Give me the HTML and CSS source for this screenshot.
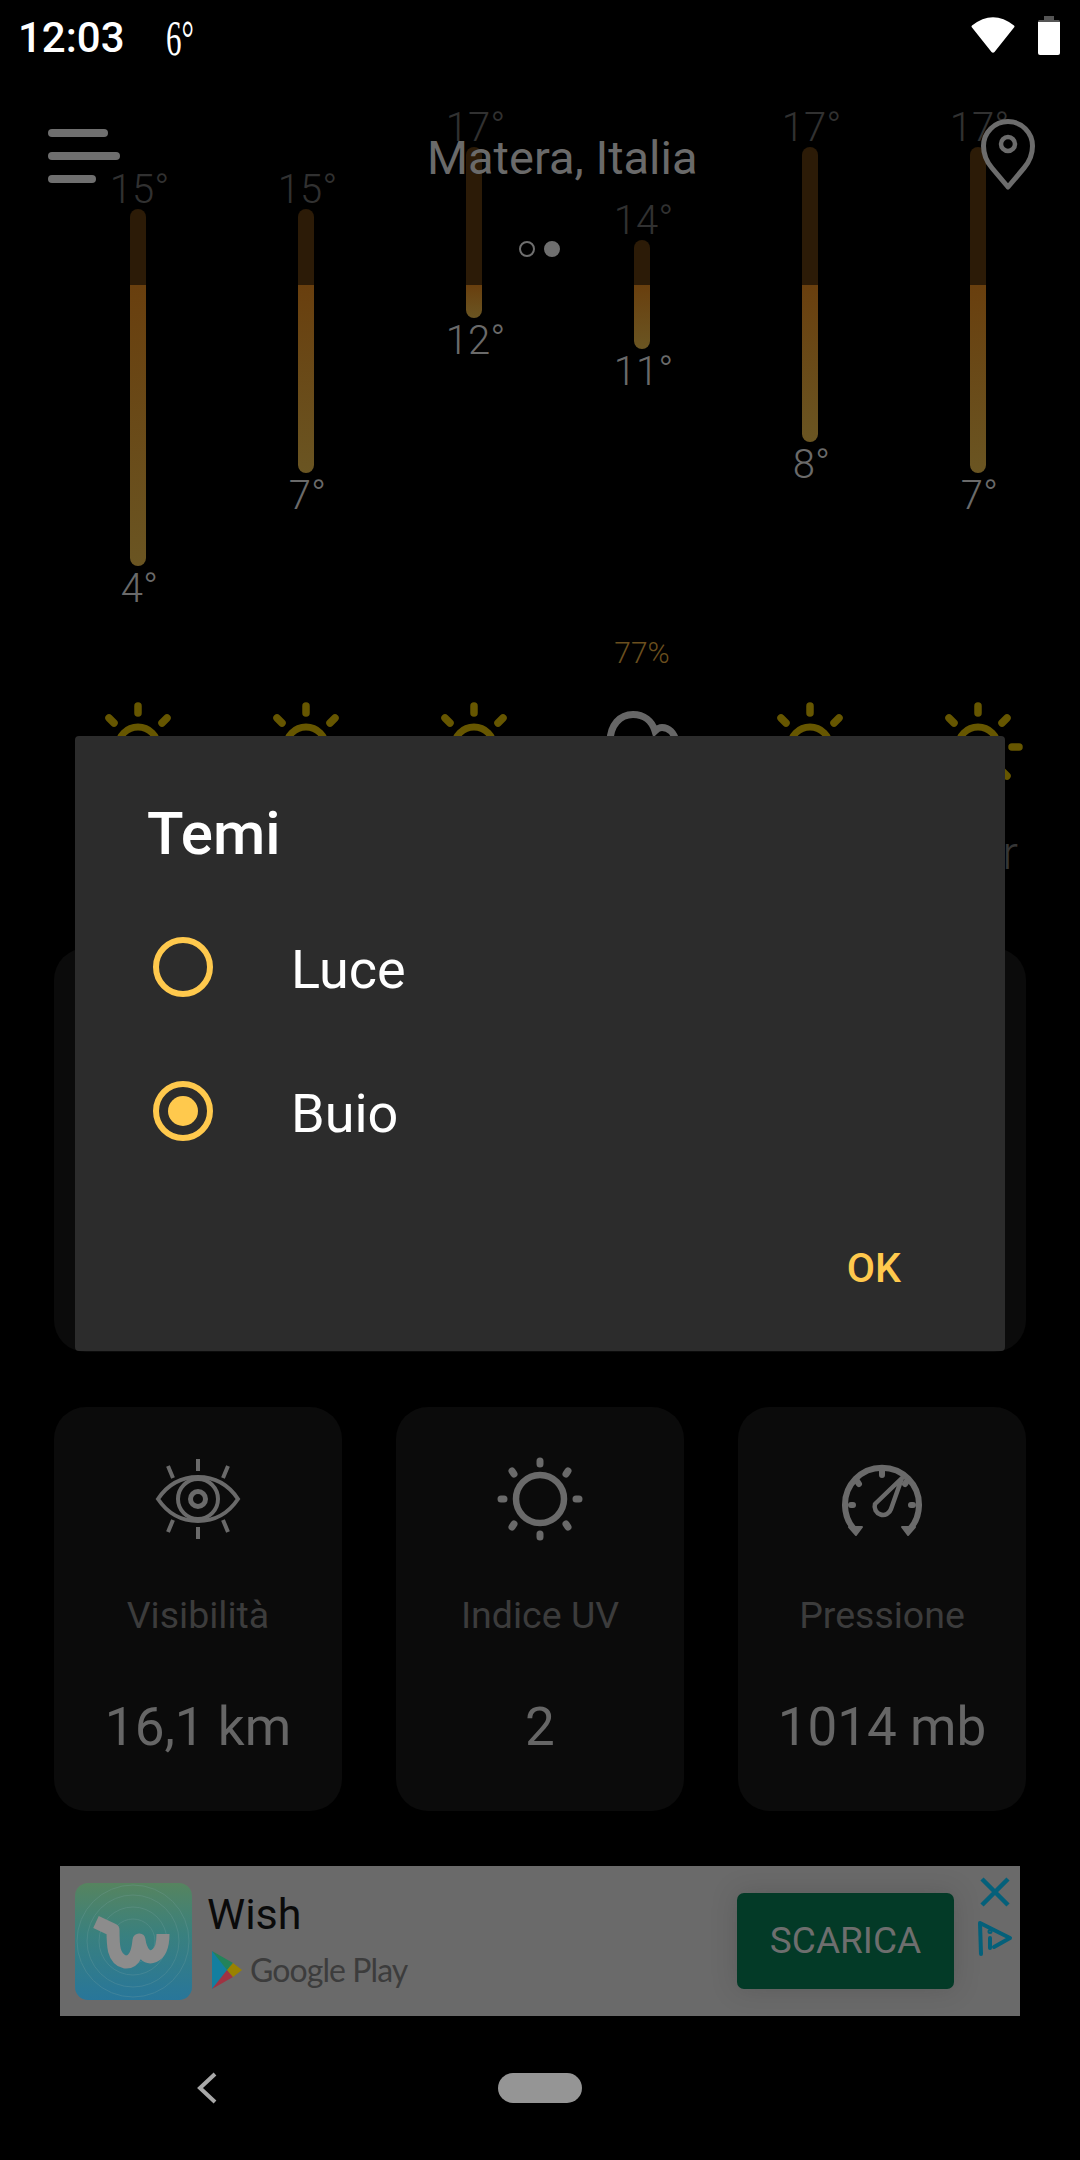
FILE: index.html
```html
<!DOCTYPE html>
<html lang="it">
<head>
    <meta charset="UTF-8">
    <meta name="viewport" content="width=device-width, initial-scale=1.0">
    <title>Meteo - Matera, Italia</title>
    <link rel="stylesheet" href="styles.css">
</head>
<body>
<div class="screen">
    <!-- Status bar -->
    <div class="status">
        <span class="time">12:03</span>
        <span class="status-temp">6°</span>
        <div class="status-icons">
            <svg width="46" height="38" viewBox="0 0 46 38"><path d="M2 9.5 Q23 -7 44 9.5 Q45 10.5 44 11.5 L24.5 36 Q23 37.5 21.5 36 L2 11.5 Q1 10.5 2 9.5 Z" fill="#fff"/></svg>
            <svg width="22" height="40" viewBox="0 0 22 40"><rect x="6" width="10" height="6" fill="#555"/><rect y="4" width="22" height="3" rx="1.5" fill="#555"/><path d="M0 6 H22 V37 Q22 39 20 39 H2 Q0 39 0 37 Z" fill="#fff"/></svg>
        </div>
    </div>

    <!-- App bar lies over the chart -->
    <div class="app-bar">
        <div class="menu">
            <span class="menu-line menu-line-a"></span>
            <span class="menu-line menu-line-b"></span>
            <span class="menu-line menu-line-c"></span>
        </div>
        <div class="city">Matera, Italia</div>
        <svg class="pin" width="56" height="74" viewBox="0 0 56 74" fill="none" stroke="#6c6c6c"><path d="M28 69 L12 50 C6 43 3.500 36 3.500 28 A24.500 24.500 0 0 1 52.500 28 C52.500 36 50 43 44 50 Z" stroke-width="5" stroke-linejoin="round"/><circle cx="28" cy="26" r="7" stroke-width="4.500"/></svg>
        <div class="pager"><span class="dot"></span><span class="dot dot-on"></span></div>
    </div>

    <!-- Temperature chart -->
    <div class="chart">
        <div class="day-col" style="padding-top:62px">
            <div class="hi">15°</div>
            <div class="bar-top" style="height:76px"></div>
            <div class="bar-low" style="height:281px"></div>
            <div class="lo">4°</div>
        </div>
        <div class="day-col" style="padding-top:62px">
            <div class="hi">15°</div>
            <div class="bar-top" style="height:76px"></div>
            <div class="bar-low" style="height:188px"></div>
            <div class="lo">7°</div>
        </div>
        <div class="day-col">
            <div class="hi">17°</div>
            <div class="bar-top" style="height:138px"></div>
            <div class="bar-low" style="height:33px"></div>
            <div class="lo">12°</div>
        </div>
        <div class="day-col" style="padding-top:93px">
            <div class="hi">14°</div>
            <div class="bar-top" style="height:45px"></div>
            <div class="bar-low" style="height:64px"></div>
            <div class="lo">11°</div>
        </div>
        <div class="day-col">
            <div class="hi">17°</div>
            <div class="bar-top" style="height:138px"></div>
            <div class="bar-low" style="height:157px"></div>
            <div class="lo">8°</div>
        </div>
        <div class="day-col">
            <div class="hi">17°</div>
            <div class="bar-top" style="height:138px"></div>
            <div class="bar-low" style="height:188px"></div>
            <div class="lo">7°</div>
        </div>
    </div>

    <!-- Forecast icons -->
    <svg width="0" height="0" class="defs">
        <symbol id="sun" viewBox="-50 -50 100 100">
            <g fill="none" stroke="#665600" stroke-linecap="round">
                <circle r="20" stroke-width="7"/>
                <path d="M0 -41 V-34 M0 41 V34 M41 0 H34 M-41 0 H-34 M-29 -29 L-24 -24 M29 -29 L24 -24 M-29 29 L-24 24 M29 29 L24 24" stroke-width="7.500"/>
            </g>
        </symbol>
    </svg>
    <div class="forecast">
        <div class="forecast-cell">
            <div class="rain"></div>
            <svg class="wx" viewBox="0 0 100 100"><use href="#sun"/></svg>
            <div class="weekday"></div>
        </div>
        <div class="forecast-cell">
            <div class="rain"></div>
            <svg class="wx" viewBox="0 0 100 100"><use href="#sun"/></svg>
            <div class="weekday"></div>
        </div>
        <div class="forecast-cell">
            <div class="rain"></div>
            <svg class="wx" viewBox="0 0 100 100"><use href="#sun"/></svg>
            <div class="weekday"></div>
        </div>
        <div class="forecast-cell">
            <div class="rain">77%</div>
            <svg class="wx" viewBox="0 0 100 100"><path d="M18 70 C10 64 14 50 18 45 C18 28 28 17.500 41 17.500 C52 17.500 60 24 63 34 C66 31 68 30.500 70 30.500 C77 30.500 82 36 84 44 C90 54 84 70 72 70 Z" fill="none" stroke="#666" stroke-width="7"/></svg>
            <div class="weekday"></div>
        </div>
        <div class="forecast-cell">
            <div class="rain"></div>
            <svg class="wx" viewBox="0 0 100 100"><use href="#sun"/></svg>
            <div class="weekday"></div>
        </div>
        <div class="forecast-cell">
            <div class="rain"></div>
            <svg class="wx" viewBox="0 0 100 100"><use href="#sun"/></svg>
            <div class="weekday">Mar</div>
        </div>
    </div>

    <!-- Card behind the dialog -->
    <div class="card-wide"></div>

    <!-- Stats -->
    <div class="stats">
        <div class="stat">
            <svg class="stat-icon" viewBox="-50 -50 100 100" fill="none" stroke="#6a6a6a" stroke-width="4">
                <path d="M-40 0 C-30 -15 -16 -22 0 -22 C16 -22 30 -15 40 0 C30 15 16 22 0 22 C-16 22 -30 15 -40 0 Z"/>
                <circle r="20"/>
                <circle r="7.500" stroke-width="5"/>
                <path d="M0 -40 V-28 M-30 -33 L-25 -21 M30 -33 L25 -21 M0 40 V28 M-30 33 L-25 21 M30 33 L25 21"/>
            </svg>
            <div class="stat-label">Visibilità</div>
            <div class="stat-value">16,1 km</div>
        </div>
        <div class="stat">
            <svg class="stat-icon" viewBox="-50 -50 100 100" fill="none" stroke="#6a6a6a" stroke-linecap="round">
                <circle r="24" stroke-width="6.500"/>
                <path d="M0 -38 V-35 M0 38 V35 M39 0 H36 M-39 0 H-36 M-28 -28 L-26 -25 M28 -28 L26 -25 M-28 28 L-26 25 M28 28 L26 25" stroke-width="7"/>
            </svg>
            <div class="stat-label">Indice UV</div>
            <div class="stat-value">2</div>
        </div>
        <div class="stat">
            <svg class="stat-icon" viewBox="-50 -50 100 100" fill="none" stroke="#6a6a6a">
                <path d="M-25 27 A37 37 0 1 1 25 27" stroke-width="6" transform="translate(0 6)"/>
                <path d="M-33 28 L-26 36 L-20 28 Z M33 28 L26 36 L20 28 Z" fill="#6a6a6a" stroke-width="2" stroke-linejoin="round"/>
                <path d="M0 -28 V-24 M-25 -18 L-23 -15 M25 -18 L23 -15 M-31 6 H-29 M31 6 H29" stroke-width="6" stroke-linecap="round"/>
                <path d="M20 -21 L9 10 A8 8 0 0 1 -7 5 Z" stroke-width="4.500" stroke-linejoin="round"/>
            </svg>
            <div class="stat-label">Pressione</div>
            <div class="stat-value">1014 mb</div>
        </div>
    </div>

    <!-- Ad banner -->
    <div class="ad">
        <svg class="ad-icon" width="117" height="117" viewBox="0 0 117 117">
            <defs>
                <linearGradient id="wishBg" x1="0" y1="0" x2="0" y2="1">
                    <stop offset="0" stop-color="#56845f"/>
                    <stop offset="0.45" stop-color="#39807f"/>
                    <stop offset="1" stop-color="#28769a"/>
                </linearGradient>
            </defs>
            <rect width="117" height="117" rx="13" fill="url(#wishBg)"/>
            <g fill="none" stroke="#7fa8a8" stroke-width="1" opacity="0.25">
                <circle cx="58" cy="58" r="22"/>
                <circle cx="58" cy="58" r="34"/>
                <circle cx="58" cy="58" r="46"/>
                <circle cx="58" cy="58" r="56"/>
            </g>
            <path d="M21 39 L38 47 C38 62 38 76 50 79 C60 80 63 68 64 57 C66 70 72 76 79 73 C86 70 88 60 88 51" fill="none" stroke="#8c8c8c" stroke-width="13" stroke-linejoin="round"/>
        </svg>
        <div class="ad-text">
            <div class="ad-name">Wish</div>
            <div class="ad-store">
                <svg width="30" height="38" viewBox="0 0 30 38">
                    <path d="M0 0 L19 19 L0 38 Z" fill="#137f9f"/>
                    <path d="M0 0 L21 12 L15 19 Z" fill="#23835a"/>
                    <path d="M0 38 L21 26 L15 19 Z" fill="#a03342"/>
                    <path d="M21 12 L30 19 L21 26 L15 19 Z" fill="#9a8200"/>
                </svg>
                <span class="store-name">Google Play</span>
            </div>
        </div>
        <div class="ad-button">SCARICA</div>
        <div class="ad-marks">
            <svg width="30" height="30" viewBox="0 0 30 30"><path d="M2 2 L28 28 M28 2 L2 28" stroke="#04607a" stroke-width="4.500"/></svg>
            <svg width="36" height="38" viewBox="0 0 36 38" fill="none" stroke="#04607a" stroke-width="4" stroke-linecap="round" stroke-linejoin="round"><path d="M4 35 L3 4 L33 19 L17 28"/><path d="M13 19 V29"/><circle cx="13" cy="12.500" r="1" stroke-width="3"/></svg>
        </div>
    </div>

    <!-- Navigation bar -->
    <div class="nav-bar">
        <svg width="22" height="32" viewBox="0 0 22 32"><path d="M19 2 L4 16 L19 30" fill="none" stroke="#a8a8a8" stroke-width="4"/></svg>
        <span class="home-pill"></span>
    </div>

    <!-- Theme dialog -->
    <div class="dialog">
        <div class="dialog-title">Temi</div>
        <div class="option">
            <span class="radio"></span>
            <span class="option-label">Luce</span>
        </div>
        <div class="option">
            <span class="radio radio-on"></span>
            <span class="option-label">Buio</span>
        </div>
        <div class="dialog-actions">
            <span class="dialog-ok">OK</span>
        </div>
    </div>
</div>
</body>
</html>
```

FILE: styles.css
```css
* {
    box-sizing: border-box;
}
body {
    margin: 0;
    background-color: #000;
    font-family: Roboto, "Liberation Sans", sans-serif;
}
.screen {
    position: relative;
    display: flex;
    flex-direction: column;
    width: 1080px;
    height: 2160px;
    overflow: hidden;
    background-color: #000;
}

/* Status bar */
.status {
    display: flex;
    align-items: center;
    height: 70px;
    padding: 5px 20px 0 18px;
    color: #fff;
}
.time {
    font-size: 42px;
    font-weight: 500;
}
.status-temp {
    display: inline-block;
    margin-left: 41px;
    font-family: "Liberation Serif", serif;
    font-size: 50px;
    line-height: 50px;
    transform: scaleX(0.62);
    transform-origin: left center;
}
.status-icons {
    display: flex;
    align-items: flex-start;
    gap: 22px;
    margin-left: auto;
    margin-top: -4px;
}

/* App bar */
.app-bar {
    position: absolute;
    top: 70px;
    left: 0;
    right: 0;
    display: flex;
    align-items: flex-start;
    padding: 59px 44px 0 48px;
}
.menu {
    display: flex;
    flex-direction: column;
    gap: 15px;
    width: 72px;
}
.menu-line {
    display: block;
    height: 8px;
    border-radius: 4px;
    background-color: #6f6f6f;
}
.menu-line-a {
    width: 60px;
}
.menu-line-b {
    width: 72px;
}
.menu-line-c {
    width: 48px;
}
.city {
    margin: 1px 0 0 307px;
    font-size: 47px;
    line-height: 56px;
    color: #6a6a6a;
}
.pin {
    margin: -11px 0 0 auto;
}
.pager {
    position: absolute;
    top: 171px;
    left: 519px;
    display: flex;
    gap: 9px;
}
.dot {
    width: 16px;
    height: 16px;
    border: 2px solid #6f6f6f;
    border-radius: 50%;
}
.dot-on {
    background-color: #6f6f6f;
}

/* Chart */
.chart {
    display: grid;
    grid-template-columns: repeat(6, 168px);
    margin: 35px 0 0 54px;
}
.day-col {
    display: flex;
    flex-direction: column;
    align-items: center;
}
.hi, .lo {
    padding-left: 3px;
    font-size: 40px;
    font-weight: 300;
}
.hi {
    margin-top: 3px;
    line-height: 39px;
    color: #313131;
}
.lo {
    line-height: 46px;
    color: #6a6a6a;
}
.bar-top {
    width: 16px;
    border-radius: 8px 8px 0 0;
    background-color: #2c1b07;
}
.bar-low {
    width: 16px;
    border-radius: 0 0 8px 8px;
    background: linear-gradient(#693f0e, #6a5522);
}

/* Forecast */
.defs {
    position: absolute;
}
.forecast {
    display: grid;
    grid-template-columns: repeat(6, 168px);
    margin: 23px 0 0 54px;
}
.forecast-cell {
    display: flex;
    flex-direction: column;
    align-items: center;
}
.rain {
    height: 36px;
    font-size: 30px;
    font-weight: 300;
    line-height: 36px;
    color: #6b4f1e;
}
.wx {
    width: 100px;
    height: 100px;
    margin-top: 26px;
}
.weekday {
    height: 52px;
    margin-top: 30px;
    font-size: 46px;
    font-weight: 300;
    line-height: 52px;
    color: #363636;
}

/* Cards */
.card-wide {
    height: 404px;
    margin: 69px 54px 0;
    border-radius: 32px;
    background-color: #0b0b0b;
}
.stats {
    display: grid;
    grid-template-columns: repeat(3, 288px);
    column-gap: 54px;
    margin: 55px 54px 0;
}
.stat {
    display: flex;
    flex-direction: column;
    align-items: center;
    height: 404px;
    padding-top: 42px;
    border-radius: 32px;
    background-color: #0b0b0b;
}
.stat-icon {
    width: 100px;
    height: 100px;
}
.stat-label {
    margin-top: 44px;
    font-size: 37.5px;
    line-height: 44px;
    color: #3c3c3c;
}
.stat-value {
    margin-top: 58px;
    font-size: 53px;
    line-height: 64px;
    color: #666;
}

/* Ad banner */
.ad {
    display: flex;
    align-items: center;
    width: 960px;
    height: 150px;
    margin: 55px 0 0 60px;
    padding-left: 15px;
    background-color: #6a6a6a;
}
.ad-icon {
    flex: none;
}
.ad-text {
    margin-left: 15px;
}
.ad-name {
    font-size: 43px;
    line-height: 47px;
    color: #0a0a0a;
}
.ad-store {
    display: flex;
    align-items: center;
    gap: 8px;
    margin: 10px 0 0 5px;
}
.store-name {
    font-family: Lato, sans-serif;
    font-size: 32px;
    letter-spacing: -0.9px;
    line-height: 44px;
    color: #3c3c3c;
}
.ad-button {
    width: 217px;
    height: 96px;
    margin-left: auto;
    border-radius: 7px;
    background-color: #033a27;
    box-shadow: 0 0 24px rgba(50, 50, 50, 0.25);
    font-size: 37px;
    line-height: 96px;
    text-align: center;
    color: #6e6e6e;
}
.ad-marks {
    display: flex;
    flex-direction: column;
    align-items: center;
    gap: 12px;
    align-self: flex-start;
    margin: 11px 7px 0 23px;
}

/* Navigation bar */
.nav-bar {
    display: flex;
    align-items: center;
    flex: 1;
    padding-left: 196px;
    gap: 280px;
}
.home-pill {
    width: 84px;
    height: 30px;
    border-radius: 15px;
    background-color: #959595;
}

/* Dialog */
.dialog {
    position: absolute;
    top: 736px;
    left: 75px;
    display: flex;
    flex-direction: column;
    width: 930px;
    height: 615px;
    padding-top: 65px;
    border-radius: 4px;
    background-color: #2c2c2c;
}
.dialog-title {
    margin: 0 0 28px 72px;
    font-size: 60px;
    font-weight: 500;
    line-height: 66px;
    color: #fff;
}
.option {
    display: flex;
    align-items: center;
    gap: 78px;
    height: 144px;
    padding-left: 78px;
}
.option-label {
    padding-top: 4px;
    font-size: 54px;
    color: #fff;
}
.radio {
    position: relative;
    width: 60px;
    height: 60px;
    border: 6px solid #ffc94d;
    border-radius: 50%;
}
.radio-on::after {
    content: "";
    position: absolute;
    top: 9px;
    left: 9px;
    width: 30px;
    height: 30px;
    border-radius: 50%;
    background-color: #ffc94d;
}
.dialog-actions {
    display: flex;
    justify-content: flex-end;
    margin-top: 61px;
    padding-right: 104px;
}
.dialog-ok {
    font-size: 41px;
    font-weight: 500;
    line-height: 48px;
    color: #ffc94d;
}
```
